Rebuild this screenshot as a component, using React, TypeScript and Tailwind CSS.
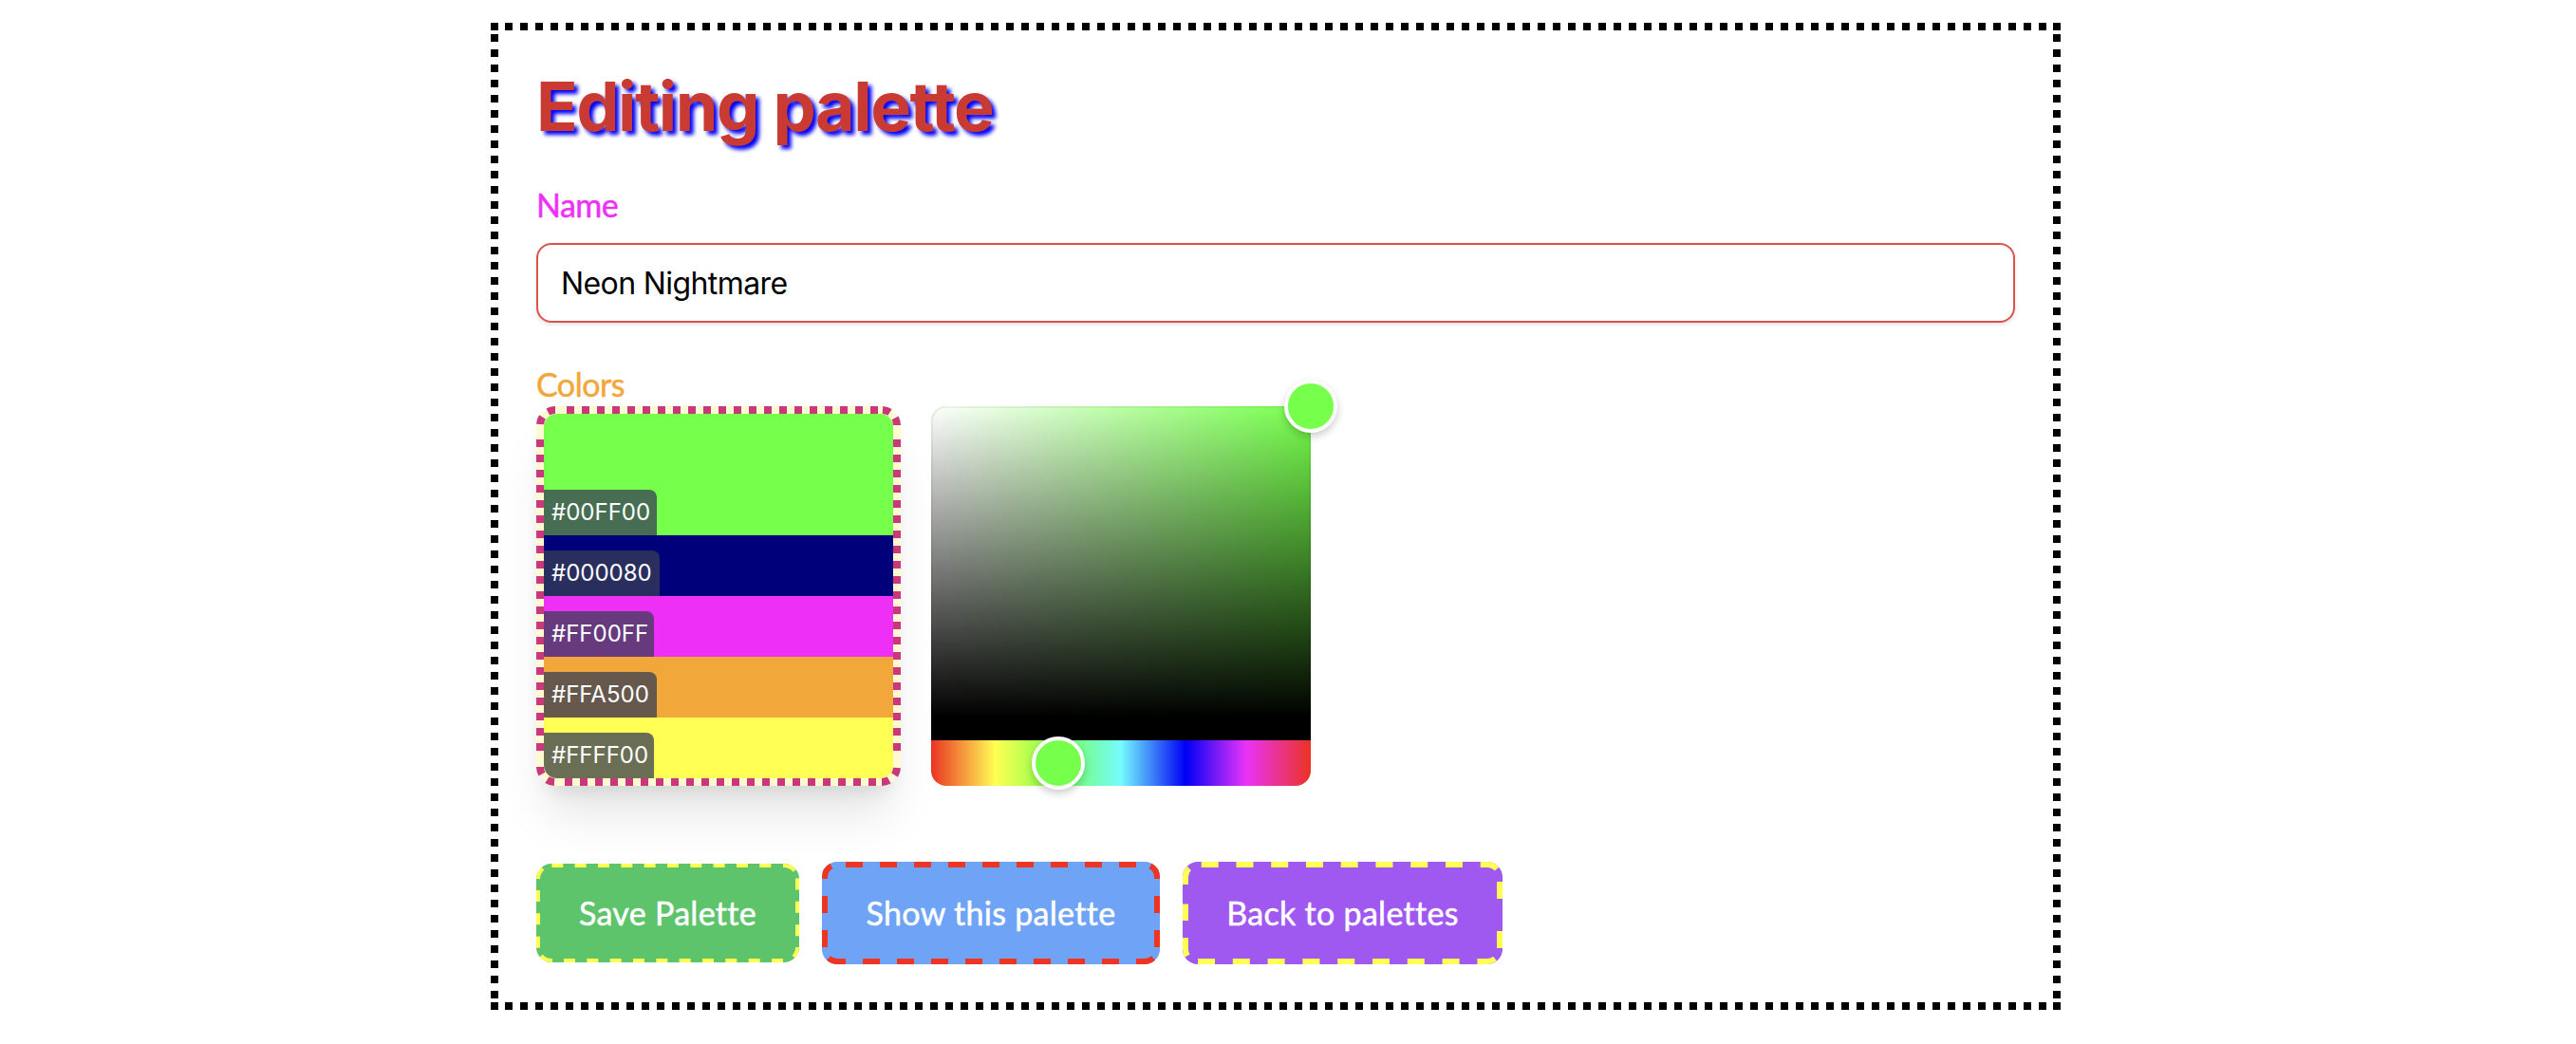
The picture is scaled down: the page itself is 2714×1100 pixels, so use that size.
import React from "react";

const h = (y: number, start: number, period: number, len: number, count: number) =>
  Array.from({ length: count }, (_, k) => `M${start + period * k} ${y}H${start + period * k + len}`).join("");
const v = (x: number, start: number, period: number, len: number, count: number) =>
  Array.from({ length: count }, (_, k) => `M${x} ${start + period * k}V${start + period * k + len}`).join("");

function Dashes({ d, color, width, arcs }: { d: string; color: string; width: number; arcs?: string }) {
  return (
    <svg className="absolute inset-0 w-full h-full pointer-events-none" fill="none" aria-hidden="true">
      <path d={d} stroke={color} strokeWidth={width} />
      {arcs && <path d={arcs} stroke={color} strokeWidth={width} strokeDasharray="8 8" strokeDashoffset={15} />}
    </svg>
  );
}

const swatches = [
  { hex: "#00FF00", cls: "bg-[#76FF4B] h-32", w: "w-[119px]" },
  { hex: "#000080", cls: "bg-[#00007B] h-16", w: "w-[122px]" },
  { hex: "#FF00FF", cls: "bg-[#EE30F7] h-16", w: "w-[116px]" },
  { hex: "#FFA500", cls: "bg-[#F2A73B] h-16", w: "w-[119px]" },
  { hex: "#FFFF00", cls: "bg-[#FFFF54] h-16", w: "w-[116px]" },
];

const comic = "font-['Lato','Open_Sans',sans-serif] [-webkit-text-stroke:0.5px_currentColor]";

export default function App() {
  return (
    <div className="min-h-[1100px] bg-white pt-6 pr-[26px] font-['Inter',sans-serif]">
      <main className="mx-auto w-[1654px] h-[1040px] p-12 [background:linear-gradient(#000,#000)_0_0/8px_8px_no-repeat,linear-gradient(#000,#000)_100%_0/8px_8px_no-repeat,linear-gradient(#000,#000)_0_100%/8px_8px_no-repeat,linear-gradient(#000,#000)_100%_100%/8px_8px_no-repeat,linear-gradient(90deg,#000_8px,transparent_8px)_15px_0/16px_8px_repeat-x,linear-gradient(90deg,#000_8px,transparent_8px)_15px_100%/16px_8px_repeat-x,linear-gradient(180deg,#000_8px,transparent_8px)_0_12px/8px_16px_repeat-y,linear-gradient(180deg,#000_8px,transparent_8px)_100%_12px/8px_16px_repeat-y]">
        <h1 className="h-20 text-[72px] leading-[80px] font-bold tracking-[-1.55px] text-[#C83A32] [text-shadow:4px_4px_4px_#0000F5]">
          Editing palette
        </h1>

        <label className={`${comic} mt-10 block h-12 text-[34px] leading-[48px] tracking-[-0.5px] text-[#EE30F7]`}>Name</label>
        <input
          readOnly
          value="Neon Nightmare"
          className="mt-4 block h-[84px] w-full rounded-2xl border-2 border-[#DB534B] bg-white px-6 text-[32px] tracking-[-0.6px] text-black shadow-[0_2px_4px_rgba(0,0,0,0.12)] outline-none"
        />

        <label className={`${comic} mt-[41px] block h-[47px] text-[34px] leading-[47px] tracking-[-0.5px] text-[#F2A73B]`}>Colors</label>

        <div className="flex gap-8">
          <div className="relative h-[400px] w-[384px] rounded-[22px] bg-[#FFFAD2] p-2 shadow-[0_40px_50px_-10px_rgba(0,0,0,0.1),0_16px_20px_-12px_rgba(0,0,0,0.1)]">
            <div className="flex h-full flex-col overflow-hidden rounded-[14px]">
              {swatches.map((s) => (
                <div key={s.hex} className={`flex items-end ${s.cls}`}>
                  <span
                    className={`${s.w} h-12 rounded-tr-lg bg-[rgba(56,62,84,0.75)] pl-2 text-[24px] leading-[48px] text-white`}
                  >
                    {s.hex}
                  </span>
                </div>
              ))}
            </div>
            <Dashes
              color="#C9387A"
              width={8}
              d={
                h(4, 32, 16, 8, 21) +
                h(396, 30, 16, 8, 21) +
                v(4, 35, 16, 8, 21) +
                v(380, 35, 16, 8, 21)
              }
              arcs="M4 20A16 16 0 0 1 20 4M364 4A16 16 0 0 1 380 20M380 380A16 16 0 0 1 364 396M20 396A16 16 0 0 1 4 380"
            />
          </div>

          <div className="relative flex h-[400px] w-[400px] flex-col">
            <div className="h-[352px] overflow-hidden rounded-t-2xl border-b-[24px] border-black bg-[#76FF4B]">
              <div className="h-full rounded-t-2xl bg-[linear-gradient(to_top,#000,transparent),linear-gradient(to_right,#fff,transparent)] shadow-[inset_0_0_0_2px_rgba(0,0,0,0.05)]" />
            </div>
            <div className="relative h-12 rounded-b-2xl bg-[linear-gradient(to_right,#EA3323_0,#FFFF54_17%,#76FF4B_33%,#75FBFD_50%,#0000F5_67%,#EA33F7_83%,#EA3323)]">
              <span className="absolute left-[106px] top-[-4px] h-14 w-14 rounded-full border-4 border-white bg-[#76FF4B] shadow-[0_4px_8px_rgba(0,0,0,0.2)]" />
            </div>
            <span className="absolute -right-7 -top-7 h-14 w-14 rounded-full border-4 border-white bg-[#76FF4B] shadow-[0_4px_8px_rgba(0,0,0,0.2)]" />
          </div>
        </div>

        <div className={`${comic} mt-20 flex items-center gap-6 text-[34px] leading-[48px] tracking-[0.3px] text-white`}>
          <button className="relative flex h-[104px] w-[277px] items-center justify-center rounded-2xl bg-[#5DC46B]">
            Save Palette
            <Dashes
              color="#FFFF54"
              width={4}
              d={
                h(2, 16.3, 24.33, 12, 10) +
                "M260 2H261A14 14 0 0 1 272 7.4" +
                v(275, 15.5, 24.33, 12, 3) +
                "M275 88A14 14 0 0 1 271 98" +
                h(102, 29, 24.33, 12, 10) +
                "M17 102H16A14 14 0 0 1 5.3 97" +
                v(2, 28, 24.33, 12, 3) +
                "M2 16A14 14 0 0 1 7 5.3"
              }
            />
          </button>
          <button className="relative flex h-[108px] w-[356px] items-center justify-center rounded-2xl bg-[#6FA3F5]">
            Show this palette
            <Dashes
              color="#EE3524"
              width={6}
              d={
                h(3, 25, 36, 18, 9) +
                "M346 4.5A13 13 0 0 1 353 16V18" +
                v(353, 36, 36, 18, 2) +
                h(105, 43, 36, 18, 8) +
                "M331 105H340A13 13 0 0 0 349 101.4" +
                "M25 105H16A13 13 0 0 1 7 101.4" +
                v(3, 36, 36, 18, 2) +
                "M3 18V16A13 13 0 0 1 10 4.5"
              }
            />
          </button>
          <button className="relative flex h-[108px] w-[337px] items-center justify-center rounded-2xl bg-[#9F59F1]">
            Back to palettes
            <Dashes
              color="#FFFF54"
              width={6}
              d={
                h(3, 19.7, 36.75, 18, 8) +
                "M313.7 3H321A13 13 0 0 1 331 7.6" +
                v(334, 21, 52, 18, 2) +
                h(105, 16, 36.8, 18, 8) +
                "M310.4 105H321A13 13 0 0 0 329 102" +
                "M3 80V92A13 13 0 0 0 5 99" +
                v(3, 44.5, 36, 17.5, 1) +
                "M3 24V16A13 13 0 0 1 6.8 6.8"
              }
            />
          </button>
        </div>
      </main>
    </div>
  );
}
